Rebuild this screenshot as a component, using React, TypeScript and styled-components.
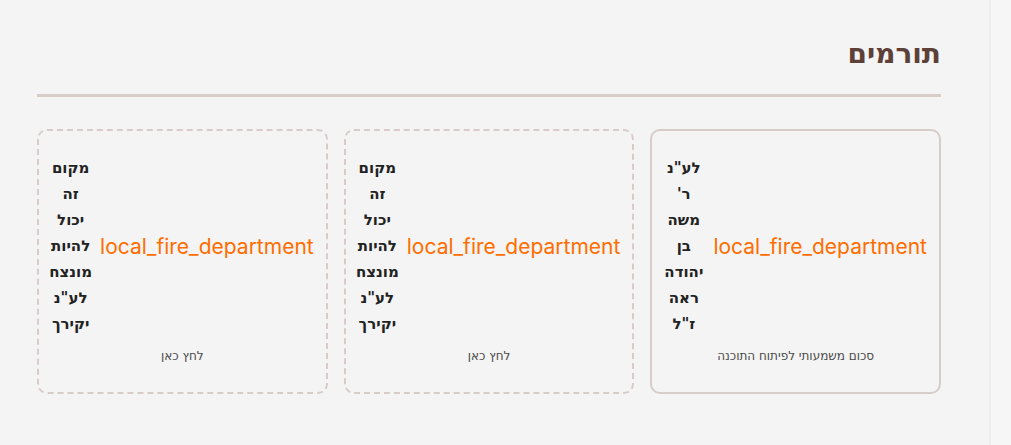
import React from "react";
import styled, { createGlobalStyle } from "styled-components";

const Global = createGlobalStyle`
  html, body { margin: 0; padding: 0; background: #f4f4f4; }
  body { font-family: "DejaVu Sans", sans-serif; }
`;

const Shell = styled.div`
  display: flex;
  direction: ltr;
  width: 1011px;
  height: 445px;
  overflow: hidden;
`;

const Main = styled.main`
  flex: 1;
  min-width: 0;
  direction: rtl;
  padding: 34px 48px 0 37px;
`;

const SideStrip = styled.div`
  flex: 0 0 20px;
  border-left: 2px solid #ececec;
  background: #f6f6f6;
`;

const Title = styled.h2`
  margin: 0;
  font-family: "DejaVu Sans", sans-serif;
  font-weight: 700;
  font-size: 28px;
  line-height: 40px;
  color: #5d4037;
  padding-bottom: 20px;
  border-bottom: 3px solid #d7ccc8;
`;

const Grid = styled.div`
  display: grid;
  grid-template-columns: repeat(3, minmax(0, 1fr));
  gap: 16px;
  margin-top: 32px;
`;

const Card = styled.div<{ $dashed?: boolean }>`
  box-sizing: border-box;
  min-width: 0;
  height: 265px;
  border: 2px ${(p) => (p.$dashed ? "dashed" : "solid")} #d7ccc8;
  border-radius: 10px;
  padding: 24px 12px 0;
  display: flex;
  flex-direction: column;
  align-items: stretch;
`;

const Row = styled.div`
  display: flex;
  align-items: center;
  justify-content: space-between;
  gap: 8px;
`;

const Icon = styled.span`
  font-family: Inter, sans-serif;
  font-size: 21px;
  color: #ff6d00;
  white-space: nowrap;
  direction: ltr;
`;

const Name = styled.span`
  font-family: "DejaVu Sans", sans-serif;
  font-weight: 700;
  font-size: 15px;
  line-height: 26px;
  color: #222;
  text-align: center;
  width: min-content;
`;

const Caption = styled.div`
  margin-top: 10px;
  font-family: "DejaVu Sans", sans-serif;
  font-size: 12px;
  line-height: 18px;
  color: #4a4a4a;
  text-align: center;
`;

const donors = [
  { name: 'לע"נ ר\' משה בן יהודה ראה ז"ל', caption: "סכום משמעותי לפיתוח התוכנה", dashed: false },
  { name: 'מקום זה יכול להיות מונצח לע"נ יקירך', caption: "לחץ כאן", dashed: true },
  { name: 'מקום זה יכול להיות מונצח לע"נ יקירך', caption: "לחץ כאן", dashed: true },
];

export default function App() {
  return (
    <Shell>
      <Global />
      <Main>
        <Title>תורמים</Title>
        <Grid>
          {donors.map((d, i) => (
            <Card key={i} $dashed={d.dashed}>
              <Row>
                <Icon>local_fire_department</Icon>
                <Name>{d.name}</Name>
              </Row>
              <Caption>{d.caption}</Caption>
            </Card>
          ))}
        </Grid>
      </Main>
      <SideStrip />
    </Shell>
  );
}
